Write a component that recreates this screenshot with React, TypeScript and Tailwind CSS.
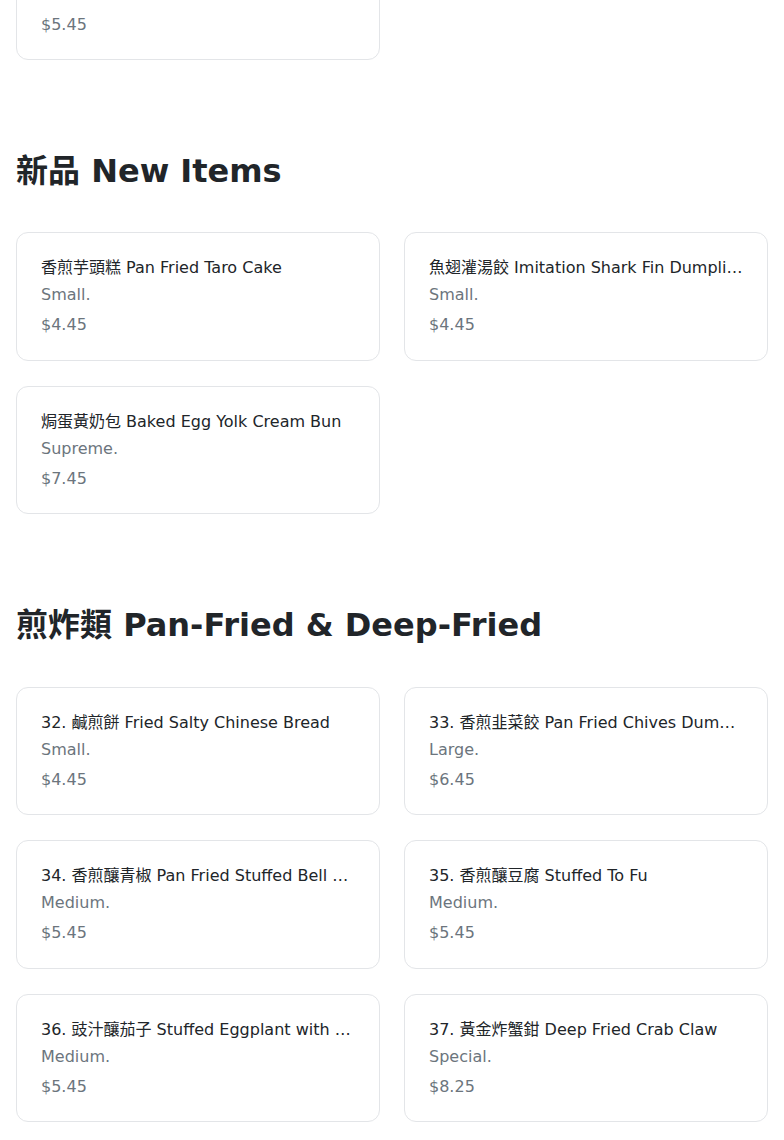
import React from 'react';

interface MenuItem {
  name: string;
  size: string;
  price: string;
}

interface Section {
  title: string;
  items: MenuItem[];
}

const sections: Section[] = [
  {
    title: '新品 New Items',
    items: [
      { name: '香煎芋頭糕 Pan Fried Taro Cake', size: 'Small.', price: '$4.45' },
      { name: '魚翅灌湯餃 Imitation Shark Fin Dumplings', size: 'Small.', price: '$4.45' },
      { name: '焗蛋黃奶包 Baked Egg Yolk Cream Bun', size: 'Supreme.', price: '$7.45' },
    ],
  },
  {
    title: '煎炸類 Pan-Fried & Deep-Fried',
    items: [
      { name: '32. 鹹煎餅 Fried Salty Chinese Bread', size: 'Small.', price: '$4.45' },
      { name: '33. 香煎韭菜餃 Pan Fried Chives Dumpling', size: 'Large.', price: '$6.45' },
      { name: '34. 香煎釀青椒 Pan Fried Stuffed Bell Pepper', size: 'Medium.', price: '$5.45' },
      { name: '35. 香煎釀豆腐 Stuffed To Fu', size: 'Medium.', price: '$5.45' },
      { name: '36. 豉汁釀茄子 Stuffed Eggplant with Black Bean Sauce', size: 'Medium.', price: '$5.45' },
      { name: '37. 黃金炸蟹鉗 Deep Fried Crab Claw', size: 'Special.', price: '$8.25' },
    ],
  },
];

function ItemCard({ item }: { item: MenuItem }) {
  return (
    <div className="bg-white border border-[#e3e5e8] rounded-xl px-6 pt-[23px] pb-[22.5px]">
      <div className="mb-[3px] text-base leading-6 text-[#212529] whitespace-nowrap overflow-hidden text-ellipsis">
        {item.name}
      </div>
      <div className="text-base leading-6 text-[#6c757d]">{item.size}</div>
      <div className="mt-1.5 text-base leading-6 text-[#6c757d]">{item.price}</div>
    </div>
  );
}

export default function App() {
  return (
    <div
      className="bg-white h-[1140px] overflow-hidden px-4"
      style={{ fontFamily: '"DejaVu Sans", "Noto Sans CJK TC", sans-serif' }}
    >
      {/* tail of the previous section, scrolled partly out of view */}
      <div className="-mt-[68.5px] grid grid-cols-2 gap-6">
        <ItemCard item={{ name: '31. 炸春卷 Spring Rolls', size: 'Medium.', price: '$5.45' }} />
      </div>

      {sections.map((section) => (
        <section key={section.title} className="pt-[92px]">
          <h2 className="text-[32px] leading-[1.2] font-bold text-[#212529] mb-[42px]">{section.title}</h2>
          <div className="grid grid-cols-2 gap-x-6 gap-y-[25px]">
            {section.items.map((item) => (
              <ItemCard key={item.name} item={item} />
            ))}
          </div>
        </section>
      ))}
    </div>
  );
}
